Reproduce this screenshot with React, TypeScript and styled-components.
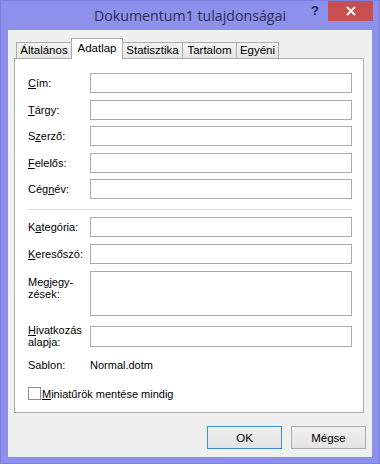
import React from 'react'
import styled, { createGlobalStyle } from 'styled-components'

const GlobalStyle = createGlobalStyle`
  html, body {
    margin: 0;
    padding: 0;
    background: #8f92ec;
  }
  * { box-sizing: border-box; }
`

const uiFont = `"Liberation Sans", Arial, sans-serif`

const Window = styled.div`
  width: 380px;
  height: 464px;
  background: #8e91eb;
  border: 1px solid #7d80dc;
  display: flex;
  flex-direction: column;
  padding: 0 7px 6px 7px;
  font-family: ${uiFont};
  font-size: 11px;
  color: #000;
`

const TitleBar = styled.div`
  height: 29px;
  display: grid;
  grid-template-columns: 1fr auto 1fr;
  align-items: start;
  margin: 0 -7px;
`

const Title = styled.div`
  font-family: "Open Sans", "Noto Sans", sans-serif;
  font-size: 14.2px;
  color: #2c2c50;
  padding-top: 5px;
`

const Controls = styled.div`
  display: flex;
  justify-content: flex-end;
  align-items: flex-start;
  margin-right: 6px;
`

const HelpButton = styled.div`
  width: 26px;
  height: 20px;
  display: flex;
  align-items: center;
  justify-content: center;
  font-weight: bold;
  font-size: 13px;
  color: #1d2450;
  padding-bottom: 2px;
`

const CloseButton = styled.div`
  width: 45px;
  height: 20px;
  background: #c84f4f;
  display: flex;
  align-items: center;
  justify-content: center;
`

const Client = styled.div`
  flex: 1;
  background: #f0f0f0;
  padding: 8px 8px 0 6px;
  display: flex;
  flex-direction: column;
`

const TabStrip = styled.div`
  height: 20px;
  display: flex;
  align-items: flex-end;
  padding-left: 2px;
`

const Tab = styled.div<{ $active?: boolean; $w: number }>`
  position: relative;
  width: ${p => p.$w}px;
  height: ${p => (p.$active ? 21 : 16)}px;
  margin-bottom: ${p => (p.$active ? -1 : 0)}px;
  margin-left: -1px;
  border: 1px solid #acacac;
  border-bottom: none;
  background: ${p => (p.$active ? '#fff' : 'linear-gradient(#f2f2f2, #e6e6e6)')};
  z-index: ${p => (p.$active ? 1 : 0)};
  display: flex;
  justify-content: center;
  padding-top: ${p => (p.$active ? 3 : 1)}px;
  font-size: 11.5px;
  &:first-child { margin-left: 0; }
`

const Panel = styled.div`
  height: 355px;
  background: #fff;
  border: 1px solid #acacac;
  padding: 14px 11px 0 13px;
  display: flex;
  flex-direction: column;
`

const FieldGrid = styled.div<{ $gap: number }>`
  display: grid;
  grid-template-columns: 62px 262px;
  row-gap: ${p => p.$gap}px;
  align-items: center;
`

const Label = styled.div<{ $pad?: number }>`
  line-height: 12px;
  align-self: ${p => (p.$pad !== undefined ? 'start' : 'center')};
  padding-top: ${p => p.$pad ?? 0}px;
`

const Key = styled.u`
  text-decoration: underline;
  text-underline-offset: 1px;
`

const TextBox = styled.div<{ $h?: number }>`
  height: ${p => p.$h ?? 20}px;
  border: 1px solid #ababab;
  background: #fff;
`

const Separator = styled.div`
  height: 1px;
  background: #dcdcdc;
  margin: 10px 0 7px 0;
  width: 324px;
`

const Spacer = styled.div<{ $h: number }>`
  height: ${p => p.$h}px;
`

const InfoRow = styled.div`
  display: grid;
  grid-template-columns: 62px 1fr;
  line-height: 13px;
`

const CheckRow = styled.label`
  display: flex;
  align-items: center;
  gap: 1px;
`

const CheckBox = styled.span`
  width: 13px;
  height: 13px;
  border: 1px solid #8f8f8f;
  background: #fff;
  display: inline-block;
`

const ButtonRow = styled.div`
  display: flex;
  justify-content: flex-end;
  gap: 9px;
  margin-top: 13px;
  margin-right: -2px;
`

const Button = styled.div<{ $default?: boolean }>`
  width: 75px;
  height: 23px;
  border: 1px solid ${p => (p.$default ? '#3c8fd6' : '#acacac')};
  background: linear-gradient(#f0f0f0, #e4e4e4);
  display: flex;
  align-items: center;
  justify-content: center;
  font-size: 11.5px;
`

const CloseIcon = () => (
  <svg width="10" height="10" viewBox="0 0 10 10">
    <path d="M1 1 L9 9 M9 1 L1 9" stroke="#fff" strokeWidth="1.8" />
  </svg>
)

const tabs = [
  { name: 'Általános', w: 56 },
  { name: 'Adatlap', w: 52, active: true },
  { name: 'Statisztika', w: 61 },
  { name: 'Tartalom', w: 55 },
  { name: 'Egyéni', w: 43 },
]

const App = () => (
  <>
    <GlobalStyle />
    <Window>
      <TitleBar>
        <div />
        <Title>Dokumentum1 tulajdonságai</Title>
        <Controls>
          <HelpButton>?</HelpButton>
          <CloseButton><CloseIcon /></CloseButton>
        </Controls>
      </TitleBar>
      <Client>
        <TabStrip>
          {tabs.map(t => (
            <Tab key={t.name} $w={t.w} $active={t.active}>{t.name}</Tab>
          ))}
        </TabStrip>
        <Panel>
          <FieldGrid $gap={6.5}>
            <Label><Key>C</Key>ím:</Label>
            <TextBox />
            <Label><Key>T</Key>árgy:</Label>
            <TextBox />
            <Label>S<Key>z</Key>erző:</Label>
            <TextBox />
            <Label><Key>F</Key>elelős:</Label>
            <TextBox />
            <Label>Cég<Key>n</Key>év:</Label>
            <TextBox />
          </FieldGrid>
          <Separator />
          <FieldGrid $gap={7}>
            <Label>K<Key>a</Key>tegória:</Label>
            <TextBox />
            <Label><Key>K</Key>eresőszó:</Label>
            <TextBox />
            <Label $pad={5}>Me<Key>g</Key>jegy-<br />zések:</Label>
            <TextBox $h={45} />
          </FieldGrid>
          <Spacer $h={8} />
          <FieldGrid $gap={0}>
            <Label $pad={0}><Key>H</Key>ivatkozás<br />alapja:</Label>
            <TextBox $h={21} />
          </FieldGrid>
          <Spacer $h={11} />
          <InfoRow>
            <span>Sablon:</span>
            <span>Normal.dotm</span>
          </InfoRow>
          <Spacer $h={15} />
          <CheckRow>
            <CheckBox />
            <span><Key>M</Key>iniatűrök mentése mindig</span>
          </CheckRow>
        </Panel>
        <ButtonRow>
          <Button $default>OK</Button>
          <Button>Mégse</Button>
        </ButtonRow>
      </Client>
    </Window>
  </>
)

export default App
